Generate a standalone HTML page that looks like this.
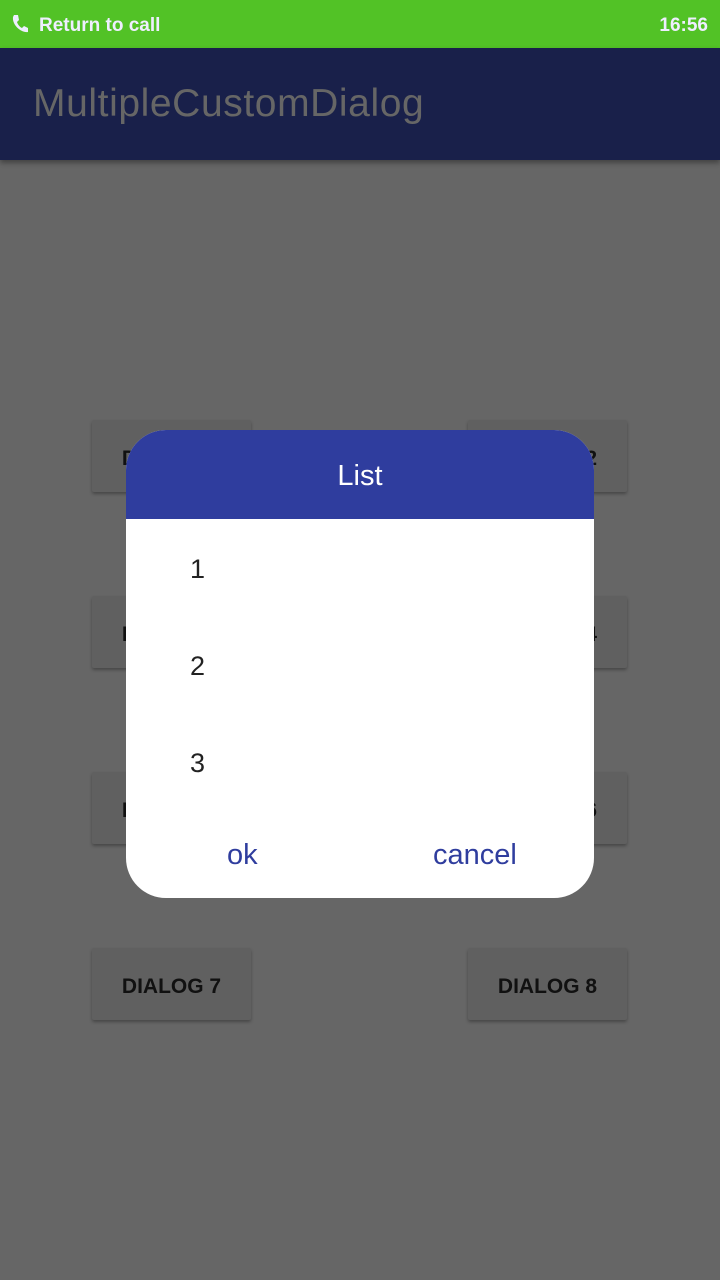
<!DOCTYPE html>
<html><head><style>
body{margin:0;width:720px;height:1280px;background:#666;font-family:"Liberation Sans",sans-serif;position:relative;overflow:hidden}
.sb{position:absolute;top:0;left:0;width:720px;height:48px;background:#52c226;color:#eef;font-weight:bold;font-size:19px}
.ab{position:absolute;top:48px;left:0;width:720px;height:112px;background:#19204a;box-shadow:0 3px 5px rgba(0,0,0,.35)}
.ab span{position:absolute;left:33px;top:34px;font-size:39px;letter-spacing:0.6px;color:#666}
.b{position:absolute;width:159px;height:72px;background:#606060;box-shadow:0 2px 3px rgba(0,0,0,.3);border-radius:2px;font-weight:bold;font-size:21px;color:#111;text-align:center;line-height:78px}
.d{position:absolute;left:126px;top:430px;width:468px;height:468px;background:#fff;border-radius:40px;overflow:hidden}
.h{height:89px;background:#2f3d9e;color:#fff;font-size:29px;text-align:center;line-height:92px}
.i{position:absolute;left:64px;font-size:27px;color:#222}
.bt{position:absolute;top:409px;font-size:29px;color:#2f3d9e}
</style></head><body>
<div class="sb">
<svg style="position:absolute;left:11px;top:14px" width="18" height="20" viewBox="0 0 18 20"><path d="M3 1 L7 1 L8 6 L6 8 C7 11 9 13 11 14 L13 12 L17 14 L17 18 C10 19 1 11 2 3 Z" fill="#eef"/></svg>
<span style="position:absolute;left:39px;top:15px">Return to call</span>
<span style="position:absolute;right:12px;top:15px">16:56</span></div>
<div class="ab"><span>MultipleCustomDialog</span></div>
<div class="b" style="left:92px;top:420px">DIALOG 1</div><div class="b" style="left:468px;top:420px">DIALOG 2</div>
<div class="b" style="left:92px;top:596px">DIALOG 3</div><div class="b" style="left:468px;top:596px">DIALOG 4</div>
<div class="b" style="left:92px;top:772px">DIALOG 5</div><div class="b" style="left:468px;top:772px">DIALOG 6</div>
<div class="b" style="left:92px;top:948px">DIALOG 7</div><div class="b" style="left:468px;top:948px">DIALOG 8</div>
<div class="d"><div class="h">List</div>
<div class="i" style="top:124px">1</div><div class="i" style="top:221px">2</div><div class="i" style="top:318px">3</div>
<div class="bt" style="left:101px">ok</div><div class="bt" style="left:307px">cancel</div></div>
</body></html>
